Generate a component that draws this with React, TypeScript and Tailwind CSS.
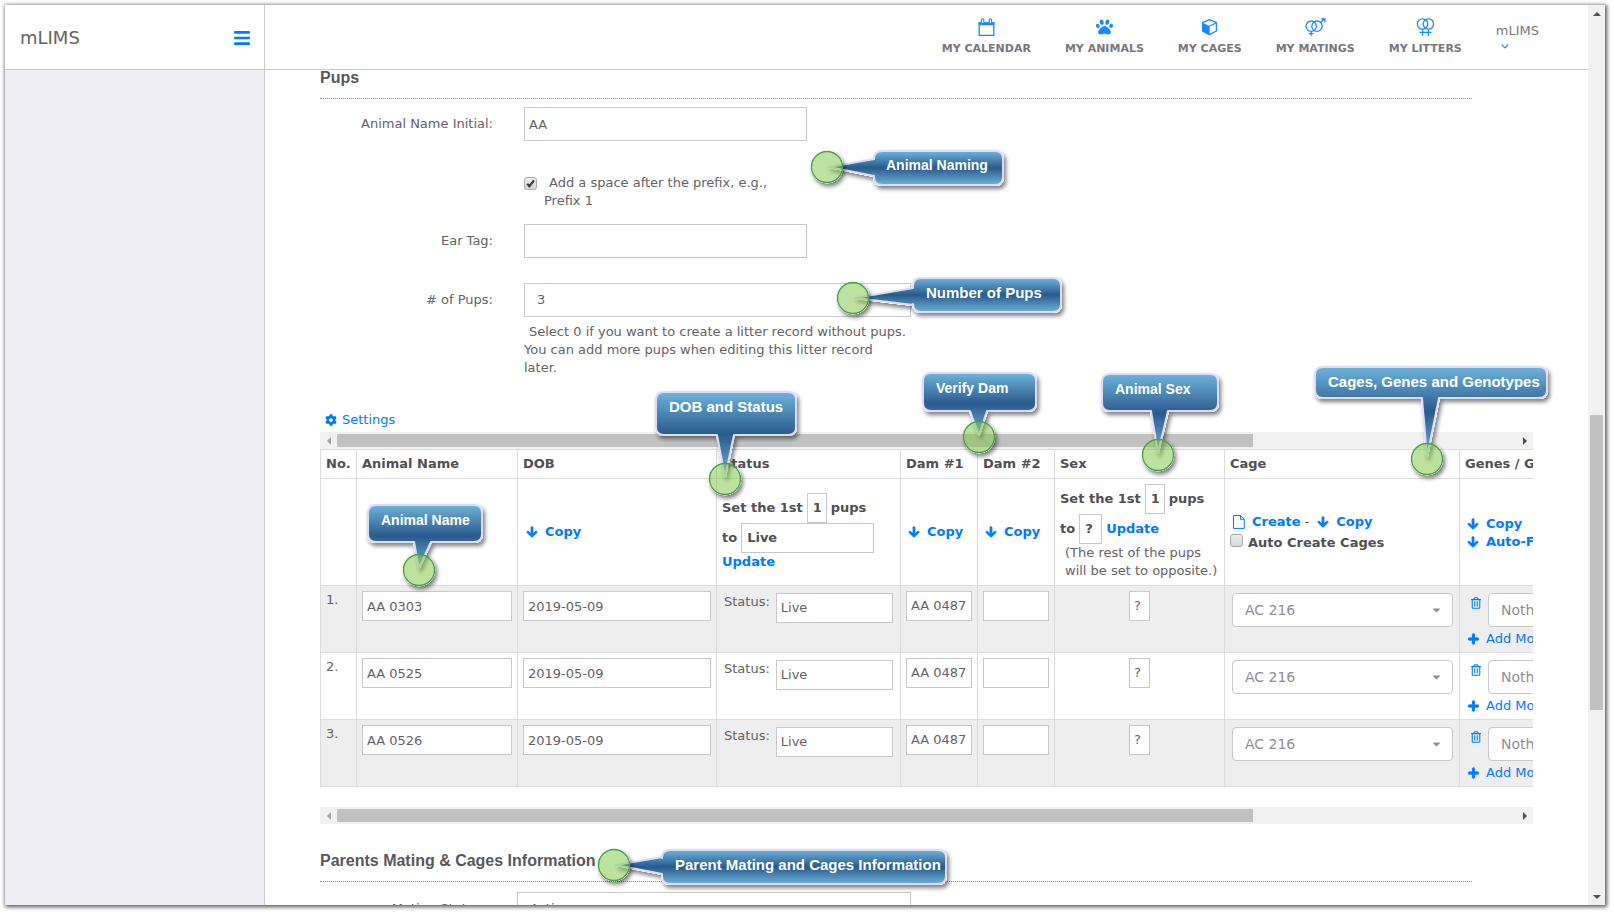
import { type ReactNode, useState } from "react";
import { FaArrowDown, FaBars, FaCaretDown, FaCog, FaPaw, FaPlus, FaRegTrashAlt } from "react-icons/fa";

const pups = [
    { no: "1.", name: "AA 0303", dob: "2019-05-09" },
    { no: "2.", name: "AA 0525", dob: "2019-05-09" },
    { no: "3.", name: "AA 0526", dob: "2019-05-09" },
]

const field = "block appearance-none rounded-none border border-[#c7c7cc] bg-white outline-none";

function CalendarIcon() {
    return (
        <svg width="17" height="18" viewBox="0 0 17 18" fill="none">
            <path d="M1.2 5h14.6v12.3H1.2z" stroke="#1a88ff" strokeWidth="1.3" />
            <path d="M.6 4.4h15.8v2.8H.6z" fill="#1a88ff" />
            <path d="M3.4 5V2a1.2 1.2 0 0 1 2.4 0v3M11.2 5V2a1.2 1.2 0 0 1 2.4 0v3" stroke="#1a88ff" strokeWidth="1.1" fill="#fff" />
        </svg>
    )
}

function CubeIcon() {
    return (
        <svg width="17" height="18" viewBox="0 0 17 18" fill="none">
            <path d="M8.5 1.6 15.4 4.6V13L8.5 16.6 1.6 13V4.6z" stroke="#1a88ff" strokeWidth="1.3" strokeLinejoin="round" />
            <path d="M1.2 4.8 8.7 8v9.2L1.2 13.4z" fill="#1a88ff" />
            <path d="M8.5 8 15.4 4.8" stroke="#1a88ff" strokeWidth="1.2" />
        </svg>
    )
}

function MatingIcon() {
    return (
        <svg width="21" height="18" viewBox="0 0 21 18" fill="none" stroke="#1a88ff" strokeWidth="1.3">
            <circle cx="6.2" cy="8.2" r="5.2" />
            <circle cx="12" cy="8.2" r="5.2" />
            <path d="M6.2 13.4v4.4M3.9 15.6h4.6M15.6 4.6 19.6 1M16.3 1h3.6v3.6" />
        </svg>
    )
}

function LitterIcon() {
    return (
        <svg width="19" height="18" viewBox="0 0 19 18" fill="none" stroke="#1a88ff" strokeWidth="1.3">
            <circle cx="6.6" cy="6" r="5.2" />
            <circle cx="12.4" cy="6" r="5.2" />
            <path d="M6.6 11.2v6.5M12.4 11.2v6.5M3.6 14.3h11.8" />
        </svg>
    )
}

function FileIcon() {
    return (
        <svg width="12" height="14" viewBox="0 0 12 14" fill="none" stroke="#007aff">
            <path d="M.5.5h7.2l3.6 3.6v9.3H.5z" />
            <path d="M7.5.5v3.8h3.8" />
        </svg>
    )
}

const navItems = [
    { label: "MY CALENDAR", icon: <CalendarIcon /> },
    { label: "MY ANIMALS", icon: <FaPaw className="w-[17px] h-[18px] text-[#1a88ff]" /> },
    { label: "MY CAGES", icon: <CubeIcon /> },
    { label: "MY MATINGS", icon: <MatingIcon /> },
    { label: "MY LITTERS", icon: <LitterIcon /> },
]

function Header() {
    return (
        <header className="flex h-[65px] shrink-0 border-b border-[#c7c7cc] bg-white">
            <div className="flex w-[260px] shrink-0 items-center justify-between border-r border-[#c7c7cc] pt-[2px] pl-[15px] pr-[14px]">
                <span className="text-[18px]">mLIMS</span>
                <button aria-label="Toggle menu">
                    <FaBars className="w-4 h-[18px] text-[#007aff]" />
                </button>
            </div>
            <nav className="flex flex-1 justify-end gap-[34px] pt-[13px] pr-[49px] text-[#78787c]">
                {navItems.map((item) => (
                    <a key={item.label} href="#" className="flex flex-col items-center">
                        {item.icon}
                        <span className="mt-[5px] text-[11px] leading-[16px] font-bold whitespace-nowrap">{item.label}</span>
                    </a>
                ))}
                <button className="flex flex-col items-start pt-1 text-left leading-[18px]">
                    mLIMS
                    <svg width="8" height="5" viewBox="0 0 8 5" className="mt-1 ml-[5px]" fill="none">
                        <path d="M.7.7 4 4 7.3.7" stroke="#1a88ff" strokeWidth="1.2" />
                    </svg>
                </button>
            </nav>
        </header>
    )
}

function VerticalScrollbar() {
    return (
        <div className="flex w-[17px] shrink-0 flex-col items-center bg-[#f1f1f1]">
            <div className="flex h-[17px] items-center">
                <svg width="8" height="4" viewBox="0 0 8 4"><path d="M0 4 4 0l4 4z" fill="#505050" /></svg>
            </div>
            <div className="flex-[393]" />
            <div className="w-[13px] flex-[295] bg-[#c1c1c1]" />
            <div className="flex-[178]" />
            <div className="flex h-[17px] items-center">
                <svg width="8" height="4" viewBox="0 0 8 4"><path d="M0 0 4 4l4-4z" fill="#505050" /></svg>
            </div>
        </div>
    )
}

function HorizontalScrollbar() {
    return (
        <div className="flex h-[17px] items-center bg-[#f1f1f1]">
            <div className="flex w-[17px] justify-center">
                <svg width="4" height="8" viewBox="0 0 4 8"><path d="M4 0 0 4l4 4z" fill="#a3a3a3" /></svg>
            </div>
            <div className="h-[13px] flex-[916] bg-[#c1c1c1]" />
            <div className="flex-[263]" />
            <div className="flex w-[17px] justify-center">
                <svg width="4" height="8" viewBox="0 0 4 8"><path d="M0 0l4 4-4 4z" fill="#505050" /></svg>
            </div>
        </div>
    )
}

function SectionTitle({ children }: { children: ReactNode }) {
    return (
        <h2 className="mr-[61px] border-b border-dotted border-[#8e8e93] pb-3 font-['Liberation_Sans',sans-serif] text-base leading-4 font-bold text-[#58585c]">
            {children}
        </h2>
    )
}

function CopyLink({ children = "Copy" }: { children?: ReactNode }) {
    return (
        <a href="#" className="flex items-center gap-[7px] font-bold whitespace-nowrap text-[#007aff]">
            <FaArrowDown className="w-3 h-3 stroke-[40]" />
            {children}
        </a>
    )
}

function Checkbox({ id, checked, onChange }: { id: string, checked: boolean, onChange: () => void }) {
    return (
        <span className="relative block h-[13px] w-[13px] shrink-0">
            <input
                id={id}
                type="checkbox"
                checked={checked}
                onChange={onChange}
                className="block h-[13px] w-[13px] appearance-none rounded-[3px] border border-[#a8a8a8] bg-linear-to-b from-[#ececec] to-[#d9d9d9]" />
            {checked &&
                <svg viewBox="0 0 13 13" className="pointer-events-none absolute inset-0" fill="none">
                    <path d="M3.2 6.8 5.4 9.2 10 3.4" stroke="#3c3c3c" strokeWidth="2.2" />
                </svg>
            }
        </span>
    )
}

function PupForm() {
    const [space, setSpace] = useState(true);

    return (
        <div className="grid grid-cols-[173px_387px] gap-x-[31px] pt-2">
            <label htmlFor="initial" className="pt-2 text-right">Animal Name Initial:</label>
            <input id="initial" defaultValue="AA" className={`${field} h-[34px] w-[283px] px-1`} />

            <div className="col-start-2 mt-[33px] flex w-[283px]">
                <div className="pt-[3px]"><Checkbox id="space" checked={space} onChange={() => setSpace(!space)} /></div>
                <label htmlFor="space" className="ml-[7px] indent-[5px]">Add a space after the prefix, e.g., Prefix 1</label>
            </div>

            <label htmlFor="ear" className="mt-[14px] pt-2 text-right">Ear Tag:</label>
            <input id="ear" className={`${field} mt-[14px] h-[34px] w-[283px] px-1`} />

            <label htmlFor="count" className="mt-[25px] pt-2 text-right"># of Pups:</label>
            <select id="count" className={`${field} mt-[25px] h-[34px] w-full px-3`}>
                <option>3</option>
            </select>
            <p className="col-start-2 mt-1.5 w-[384px] indent-[5px]">
                Select 0 if you want to create a litter record without pups. You can add more pups when editing this litter record later.
            </p>
        </div>
    )
}

function PupTable() {
    const [auto, setAuto] = useState(false);
    const small = `${field} h-[30px] px-[5px] font-bold`;

    return (
        <div className="overflow-hidden">
            <table className="w-[1440px] table-fixed border-separate border-spacing-0 border-t border-l border-[#dcdcdc] text-left [&_td]:border-r [&_td]:border-b [&_td]:border-[#dcdcdc] [&_th]:border-r [&_th]:border-b [&_th]:border-[#dcdcdc]">
                <colgroup>
                    <col className="w-9" />
                    <col className="w-[161px]" />
                    <col className="w-[199px]" />
                    <col className="w-[184px]" />
                    <col className="w-[77px]" />
                    <col className="w-[77px]" />
                    <col className="w-[170px]" />
                    <col className="w-[235px]" />
                    <col />
                </colgroup>
                <thead>
                    <tr className="h-[29px] text-[#505054] [&>th]:px-[5px] [&>th]:whitespace-nowrap">
                        <th>No.</th>
                        <th>Animal Name</th>
                        <th>DOB</th>
                        <th>Status</th>
                        <th>Dam #1</th>
                        <th>Dam #2</th>
                        <th>Sex</th>
                        <th>Cage</th>
                        <th>Genes / Genotypes</th>
                    </tr>
                    <tr className="h-[107px] text-[#505054] [&>td]:px-[5px]">
                        <td />
                        <td />
                        <td className="pl-2!"><CopyLink /></td>
                        <td className="font-bold">
                            <div className="whitespace-nowrap">
                                <div className="flex items-center gap-1">
                                    Set the 1st
                                    <select aria-label="Number of pups" className={`${small} w-5`}><option>1</option></select>
                                    pups
                                </div>
                                <div className="flex items-center gap-1">
                                    to
                                    <select aria-label="Status" className={`${small} w-[133px]`}><option>Live</option></select>
                                </div>
                                <a href="#" className="text-[#007aff]">Update</a>
                            </div>
                        </td>
                        <td className="pl-[7px]!"><CopyLink /></td>
                        <td className="pl-[7px]!"><CopyLink /></td>
                        <td>
                            <div className="whitespace-nowrap">
                                <div className="flex items-center gap-1 font-bold">
                                    Set the 1st
                                    <select aria-label="Number of pups" className={`${small} w-5`}><option>1</option></select>
                                    pups
                                </div>
                                <div className="flex items-center gap-1 font-bold">
                                    to
                                    <select aria-label="Sex" className={`${small} w-[23px]`}><option>?</option></select>
                                    <a href="#" className="text-[#007aff]">Update</a>
                                </div>
                                <div className="pl-[5px] text-[#636367]">(The rest of the pups<br />will be set to opposite.)</div>
                            </div>
                        </td>
                        <td>
                            <div className="flex items-center gap-1 pl-[3px] whitespace-nowrap">
                                <a href="#" className="flex items-center gap-[7px] font-bold text-[#007aff]">
                                    <FileIcon />
                                    Create
                                </a>
                                <span>-</span>
                                <span className="pl-1"><CopyLink /></span>
                            </div>
                            <div className="mt-[3px] flex items-start gap-[5px] font-bold whitespace-nowrap">
                                <Checkbox id="auto" checked={auto} onChange={() => setAuto(!auto)} />
                                <label htmlFor="auto">Auto Create Cages</label>
                            </div>
                        </td>
                        <td className="pt-[2px] pl-[7px]!">
                            <CopyLink />
                            <CopyLink>Auto-Fill</CopyLink>
                        </td>
                    </tr>
                </thead>
                <tbody>
                    {pups.map((pup, index) => (
                        <tr key={index} className="h-[67px] align-top odd:bg-[#eeeeee] [&>td]:px-[5px] [&>td]:pt-[5px]">
                            <td>{pup.no}</td>
                            <td><input aria-label="Animal name" defaultValue={pup.name} className={`${field} h-[30px] w-full px-1`} /></td>
                            <td><input aria-label="DOB" defaultValue={pup.dob} className={`${field} h-[30px] w-full px-1`} /></td>
                            <td>
                                <label className="flex gap-1.5 pt-[2px] pr-[2px] pl-[2px]">
                                    Status:
                                    <select className={`${field} h-[30px] min-w-0 flex-1 px-1`}><option>Live</option></select>
                                </label>
                            </td>
                            <td><select aria-label="Dam 1" className={`${field} h-[30px] w-full pl-1`}><option>AA 0487</option></select></td>
                            <td><select aria-label="Dam 2" className={`${field} h-[30px] w-full px-1`}><option></option></select></td>
                            <td><select aria-label="Sex" className={`${field} mx-auto h-[30px] w-[21px] pl-1`}><option>?</option></select></td>
                            <td>
                                <div className="relative mt-[2px] mr-px ml-[2px]">
                                    <select aria-label="Cage" className="block h-[34px] w-full appearance-none rounded border border-[#c7c7cc] bg-white px-3 text-sm text-[#8e8e93]">
                                        <option>AC 216</option>
                                    </select>
                                    <FaCaretDown className="pointer-events-none absolute top-[11px] right-3 h-3 w-[9px] text-[#8e8e93]" />
                                </div>
                            </td>
                            <td>
                                <div className="mt-[2px] flex items-start pl-1.5">
                                    <button aria-label="Remove gene" className="w-[17px] pt-1 text-[#007aff]"><FaRegTrashAlt className="w-[10px] h-3" /></button>
                                    <select aria-label="Gene" className="block h-[34px] w-[220px] appearance-none rounded border border-[#c7c7cc] bg-white px-3 text-sm text-[#8e8e93]">
                                        <option>Nothing selected</option>
                                    </select>
                                </div>
                                <a href="#" className="mt-[3px] flex items-center gap-[7px] pl-[3px] whitespace-nowrap text-[#007aff]">
                                    <FaPlus className="w-[11px] h-3 stroke-[40]" />
                                    Add More
                                </a>
                            </td>
                        </tr>
                    ))}
                </tbody>
            </table>
        </div>
    )
}

type Note = {
    text: string
    box: [number, number, number, number]
    side: "left" | "bottom"
    base: number
    tip: [number, number]
    label: [number, number]
    size: number
}

// box is left, top, right, bottom; base is where the tail leaves the box
const notes: Note[] = [
    { text: "Animal Naming", box: [874, 151, 1003, 185], side: "left", base: 159, tip: [829, 167], label: [886, 170], size: 14 },
    { text: "Number of Pups", box: [913, 278, 1061, 312], side: "left", base: 288, tip: [855, 298], label: [926, 298], size: 15 },
    { text: "DOB and Status", box: [656, 392, 796, 435], side: "bottom", base: 717, tip: [725, 477], label: [669, 412], size: 15 },
    { text: "Animal Name", box: [368, 505, 482, 542], side: "bottom", base: 414, tip: [419, 568], label: [381, 525], size: 14 },
    { text: "Verify Dam", box: [923, 373, 1036, 411], side: "bottom", base: 970, tip: [979, 435], label: [936, 393], size: 14 },
    { text: "Animal Sex", box: [1102, 374, 1218, 411], side: "bottom", base: 1151, tip: [1158, 453], label: [1115, 394], size: 14 },
    { text: "Cages, Genes and Genotypes", box: [1315, 367, 1547, 398], side: "bottom", base: 1422, tip: [1427, 457], label: [1328, 387], size: 15 },
    { text: "Parent Mating and Cages Information", box: [662, 850, 946, 884], side: "left", base: 857, tip: [616, 865], label: [675, 870], size: 15 },
]

function notePath({ box, side, base, tip }: Note) {
    const [l, t, r, b] = box;
    const k = 8;
    const bottom = side === "bottom" ? `H${base + 17}L${tip[0]} ${tip[1]}L${base} ${b}` : "";
    const left = side === "left" ? `V${base + 17}L${tip[0]} ${tip[1]}L${l} ${base}` : "";
    return `M${l + k} ${t}H${r - k}Q${r} ${t} ${r} ${t + k}V${b - k}Q${r} ${b} ${r - k} ${b}${bottom}H${l + k}Q${l} ${b} ${l} ${b - k}${left}V${t + k}Q${l} ${t} ${l + k} ${t}Z`;
}

function Annotations() {
    return (
        <svg className="pointer-events-none absolute inset-0 h-full w-full">
            <defs>
                <linearGradient id="note" x1="0" y1="0" x2="0" y2="1">
                    <stop offset="0" stopColor="#6fb3da" />
                    <stop offset="0.5" stopColor="#295a8d" />
                    <stop offset="1" stopColor="#6fb3da" />
                </linearGradient>
                {/* shadow is cut out under the shape so the see-through circles stay bright */}
                <filter id="shade" x="-20%" y="-20%" width="150%" height="160%">
                    <feComponentTransfer in="SourceAlpha" result="solid">
                        <feFuncA type="linear" slope="3" />
                    </feComponentTransfer>
                    <feGaussianBlur in="solid" stdDeviation="2" />
                    <feOffset dx="2" dy="3" />
                    <feComponentTransfer>
                        <feFuncA type="linear" slope="0.5" />
                    </feComponentTransfer>
                    <feComposite operator="out" in2="solid" result="shadow" />
                    <feMerge>
                        <feMergeNode in="shadow" />
                        <feMergeNode in="SourceGraphic" />
                    </feMerge>
                </filter>
            </defs>
            {notes.map((note) => {
                const cx = note.side === "left" ? note.tip[0] - 2 : note.tip[0];
                const cy = note.side === "left" ? note.tip[1] : note.tip[1] + 2;
                return (
                    <g key={note.text}>
                        <path d={notePath(note)} fill="url(#note)" stroke="#dcdcf8" strokeWidth="2" strokeLinejoin="round" filter="url(#shade)" />
                        <circle cx={cx} cy={cy} r="15.5" fill="#7cc540" fillOpacity="0.5" stroke="#45a049" strokeWidth="1.3" colorInterpolationFilters="sRGB" filter="url(#shade)" />
                        <text x={note.label[0]} y={note.label[1]} fontSize={note.size} fill="#fff" className="font-['Liberation_Sans',sans-serif] font-bold">
                            {note.text}
                        </text>
                    </g>
                )
            })}
        </svg>
    )
}

export default function App() {
    return (
        <div className="relative h-screen overflow-hidden bg-white pt-[5px] pr-[9px] pb-[9px] pl-[5px] font-['DejaVu_Sans',sans-serif] text-[13px] leading-[18px] text-[#636367]">
            <div className="flex h-full bg-white shadow-[1px_1px_4px_1px_rgba(0,0,0,0.65)]">
                <div className="flex min-w-0 flex-1 flex-col">
                    <Header />
                    <div className="flex min-h-0 flex-1">
                        <aside className="w-[260px] shrink-0 border-r border-[#c7c7cc] bg-[#efeef4]" />
                        <main className="min-w-0 flex-1 overflow-hidden pr-[55px] pl-[55px]">
                            <SectionTitle>Pups</SectionTitle>
                            <PupForm />
                            <a href="#" className="mt-[34px] mb-[3px] flex w-fit items-center gap-[5px] pl-[5px] text-[#007aff]">
                                <FaCog className="w-3 h-3" />
                                Settings
                            </a>
                            <HorizontalScrollbar />
                            <PupTable />
                            <div className="mt-5 mb-[29px]"><HorizontalScrollbar /></div>
                            <SectionTitle>Parents Mating &amp; Cages Information</SectionTitle>
                            <div className="grid grid-cols-[166px_394px] gap-x-[31px] pt-[10px]">
                                <label htmlFor="mating" className="pt-2 text-right">Mating Status:</label>
                                <select id="mating" className={`${field} h-[34px] w-full px-3`}>
                                    <option>Active</option>
                                </select>
                            </div>
                        </main>
                    </div>
                </div>
                <VerticalScrollbar />
            </div>
            <Annotations />
        </div>
    )
}
